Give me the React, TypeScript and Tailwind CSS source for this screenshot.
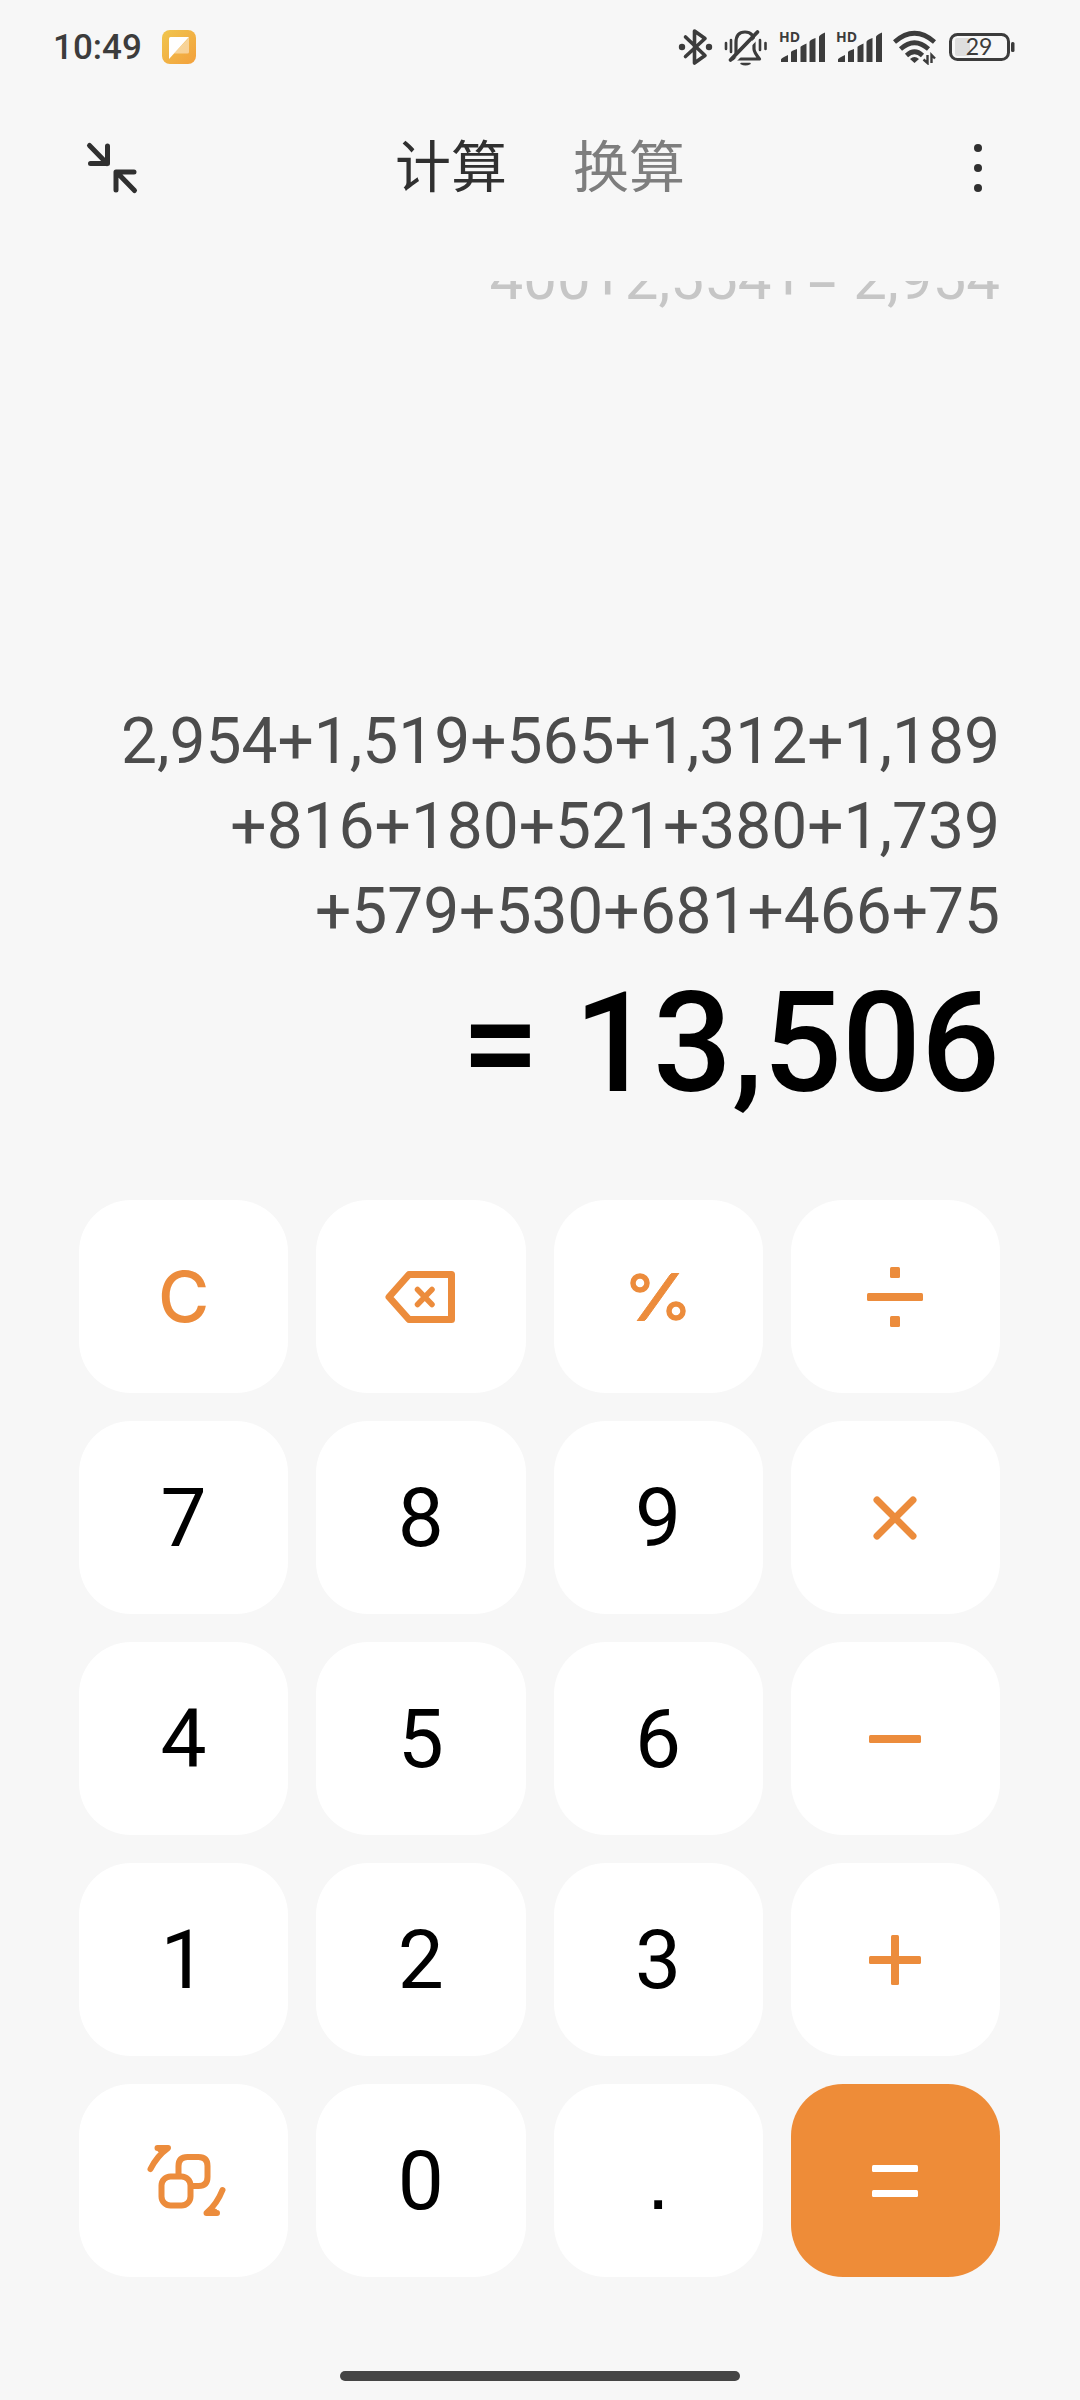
import type { ReactNode } from "react";

const HISTORY = "400+2,554+= 2,954";

const EXPRESSION = [
  "2,954+1,519+565+1,312+1,189",
  "+816+180+521+380+1,739",
  "+579+530+681+466+75",
];

const RESULT = "= 13,506";

type Key = { id: string; label: string; face?: ReactNode };

const KEYS: Key[] = [
  {
    id: "clear",
    label: "清除",
    face: <span className="font-[Inter] text-[70px] font-medium leading-none">C</span>,
  },
  { id: "backspace", label: "退格", face: <BackspaceIcon /> },
  { id: "percent", label: "百分号", face: <PercentIcon /> },
  { id: "divide", label: "除", face: <DivideIcon /> },
  { id: "7", label: "7" },
  { id: "8", label: "8" },
  { id: "9", label: "9" },
  { id: "multiply", label: "乘", face: <MultiplyIcon /> },
  { id: "4", label: "4" },
  { id: "5", label: "5" },
  { id: "6", label: "6" },
  { id: "minus", label: "减", face: <MinusIcon /> },
  { id: "1", label: "1" },
  { id: "2", label: "2" },
  { id: "3", label: "3" },
  { id: "plus", label: "加", face: <PlusIcon /> },
  { id: "switch", label: "切换", face: <SwitchIcon /> },
  { id: "0", label: "0" },
  {
    id: "point",
    label: "小数点",
    face: (
      <span className="font-['Liberation_Sans'] text-[82px] leading-none text-black">.</span>
    ),
  },
  { id: "equals", label: "等于", face: <EqualsIcon /> },
];

export default function App() {
  return (
    <div className="flex min-h-screen flex-col bg-[#f7f7f7] font-[Roboto,'Noto_Sans_CJK_SC',sans-serif]">
      <StatusBar />
      <Header />

      <main className="mt-[39px] flex flex-1 flex-col">
        <section className="flex flex-1 flex-col justify-between px-20 text-right">
          {/* Older entry, scrolled half out of view */}
          <div className="flex h-7 items-end justify-end overflow-hidden">
            <p className="whitespace-nowrap text-[60px] leading-[60px] text-[#c6c6c6]">
              {HISTORY}
            </p>
          </div>
          <div className="pb-[86px]">
            {EXPRESSION.map((line) => (
              <p
                key={line}
                className="whitespace-nowrap text-[64px] leading-[85px] text-[#4c4c4c]"
              >
                {line}
              </p>
            ))}
            <output className="mt-5 block whitespace-nowrap text-[139px] font-medium leading-[140px] text-black">
              {RESULT}
            </output>
          </div>
        </section>

        <section className="grid auto-rows-[193px] grid-cols-4 gap-7 pl-[79px] pr-20">
          {KEYS.map((key) => (
            <KeyButton key={key.id} item={key} />
          ))}
        </section>
      </main>

      <div className="flex justify-center pb-[19px] pt-[94px]">
        <div className="h-2.5 w-[400px] rounded-full bg-[#454545]" />
      </div>
    </div>
  );
}

function KeyButton({ item }: { item: Key }) {
  return (
    <button
      type="button"
      aria-label={item.label}
      className={`flex items-center justify-center rounded-[52px] ${
        item.id === "equals" ? "bg-[#ee8c38] text-white" : "bg-white text-[#ec8c3c]"
      }`}
    >
      {item.face ?? (
        <span className="text-[82px] leading-none text-black">{item.label}</span>
      )}
    </button>
  );
}

function Header() {
  return (
    <header className="grid h-[148px] grid-cols-[1fr_auto_1fr] items-center px-[84px]">
      <button type="button" aria-label="缩小窗口" className="justify-self-start text-[#303030]">
        <svg width="56" height="56" viewBox="0 0 56 56" fill="none" stroke="currentColor" strokeWidth="5" strokeLinecap="round" strokeLinejoin="round">
          <path d="M5.500 5.500 23 23.500M23.500 6V23.500H6.500" />
          <path d="M50.500 50.500 33 32.500M32 50V32H50" />
        </svg>
      </button>
      <nav className="flex gap-[66px] text-[56px] leading-[72px]">
        <button type="button" aria-current="page" className="text-[#303030]">
          计算
        </button>
        <button type="button" className="text-[#7e7e7e]">
          换算
        </button>
      </nav>
      <button type="button" aria-label="更多" className="justify-self-end text-[#303030]">
        <svg width="36" height="56" viewBox="0 0 36 56" fill="currentColor">
          <circle cx="18" cy="8" r="4" />
          <circle cx="18" cy="28" r="4" />
          <circle cx="18" cy="48" r="4" />
        </svg>
      </button>
    </header>
  );
}

/* Status bar */

function StatusBar() {
  return (
    <div className="flex h-[94px] items-center justify-between pl-[53px] pr-[65px] text-[#3c3c3c]">
      <div className="flex items-center gap-5">
        <span className="text-[35px] font-medium leading-none">10:49</span>
        <NotesBadge />
      </div>
      <div className="flex items-center gap-[11px]">
        <BluetoothIcon />
        <MutedBellIcon />
        <SignalIcon />
        <SignalIcon />
        <WifiIcon />
        <Battery level={29} />
      </div>
    </div>
  );
}

function NotesBadge() {
  return (
    <svg width="34" height="34" viewBox="0 0 34 34">
      <defs>
        <linearGradient id="notes" x1="0" y1="0" x2="1" y2="1">
          <stop offset="0" stopColor="#f0c64e" />
          <stop offset="1" stopColor="#f3a03c" />
        </linearGradient>
      </defs>
      <rect width="34" height="34" rx="8" fill="url(#notes)" />
      <path d="M27 7.500V22Q27 23.500 25.500 23.500H12L27 7.500Z" fill="#fff" fillOpacity="0.45" />
      <path d="M8.500 7H27L7 29V8.500Q7 7 8.500 7Z" fill="#fff" />
    </svg>
  );
}

function BluetoothIcon() {
  return (
    <svg width="35" height="38" viewBox="0 0 35 38" fill="none" stroke="currentColor" strokeWidth="3.600" strokeLinejoin="round" strokeLinecap="round">
      <path d="M7.500 9 27 27.500 16.500 35V3L27 10.500 7.500 28.500" />
      <circle cx="4" cy="19" r="3.200" fill="currentColor" stroke="none" />
      <circle cx="31" cy="19" r="3.200" fill="currentColor" stroke="none" />
    </svg>
  );
}

function MutedBellIcon() {
  return (
    <svg width="44" height="38" viewBox="0 0 44 38" fill="none" stroke="currentColor" strokeWidth="3.200" strokeLinecap="round" strokeLinejoin="round">
      <path d="M12 25V14.500Q12 4 21 4T30 14.500V21Q30 24 35.500 31H9" />
      <path d="M17 35.500H26Q21.500 38 17 35.500Z" strokeWidth="1.500" fill="currentColor" />
      <path d="M9.500 34.500 36 7" stroke="#f7f7f7" strokeWidth="3" />
      <path d="M6.500 32 33.500 4" strokeWidth="3.800" />
      <path d="M2 15V21M7 12V24M36 12V22M41.500 15V21" strokeWidth="2.600" />
    </svg>
  );
}

function SignalIcon() {
  return (
    <svg width="46" height="46" viewBox="0 -6 46 46" fill="currentColor">
      <text x="0" y="12" className="font-['Open_Sans'] text-[14px] font-bold">
        HD
      </text>
      <path d="M2 32V29.500Q2 28 9 25V32ZM12 32V22Q12 21 18 19V32ZM21.500 32V17Q21.500 16 27.500 13.500V32ZM30.500 32V12Q30.500 10 36.500 8V32ZM40 32V7Q40 5 46 2.500V32Z" />
    </svg>
  );
}

function WifiIcon() {
  return (
    <svg width="45" height="36" viewBox="0 0 45 36" fill="none" stroke="currentColor" strokeWidth="4.600">
      <path d="M1.500 13Q21.500-4.500 41.500 13" />
      <path d="M7.500 20Q21.500 7.500 35.500 20" />
      <path d="M13.500 26.500Q21.500 19 29.500 26.500" />
      <path d="M17 30Q21.500 26 26 30L21.500 34Z" fill="currentColor" stroke="none" />
      <path d="M34.500 26V34L30.500 30.500M38.500 34V26L42 29.500" strokeWidth="2.400" />
    </svg>
  );
}

function Battery({ level }: { level: number }) {
  return (
    <svg width="66" height="30" viewBox="0 0 66 30" fill="none">
      <rect x="6" y="6" width="15" height="18" rx="2" fill="#dedede" />
      <rect x="1.500" y="2.500" width="58" height="25" rx="7" stroke="currentColor" strokeWidth="3" />
      <rect x="62" y="10" width="3.500" height="10" rx="1.500" fill="currentColor" />
      <text x="30" y="23" textAnchor="middle" fill="currentColor" className="font-[Lato] text-[23px]">
        {level}
      </text>
    </svg>
  );
}

/* Key icons */

function BackspaceIcon() {
  return (
    <svg width="72" height="54" viewBox="0 0 72 54" fill="none" stroke="currentColor" strokeWidth="7" strokeLinejoin="round" strokeLinecap="round">
      <path d="M24 4.500H66.500V49.500H24L4 27Z" />
      <path d="M32.500 19.500 47 34.500M47 19.500 32.500 34.500" strokeWidth="5.500" />
    </svg>
  );
}

function PercentIcon() {
  return (
    <svg width="56" height="48" viewBox="0 0 56 48" fill="none" stroke="currentColor">
      <circle cx="10" cy="10" r="7" strokeWidth="5.500" />
      <circle cx="46" cy="38" r="7" strokeWidth="5.500" />
      <path d="M43 0H49L16 46Q14.500 48 13 48H7L40 2Q41.500 0 43 0Z" fill="currentColor" stroke="currentColor" strokeWidth="1" />
    </svg>
  );
}

function DivideIcon() {
  return (
    <svg width="56" height="60" viewBox="0 0 56 60" fill="currentColor">
      <rect x="23" y="0" width="10" height="11" rx="1.500" />
      <rect x="0" y="26" width="56" height="8" rx="1.500" />
      <rect x="23" y="49" width="10" height="11" rx="1.500" />
    </svg>
  );
}

function MultiplyIcon() {
  return (
    <svg width="44" height="44" viewBox="0 0 44 44" stroke="currentColor" strokeWidth="7" strokeLinecap="round">
      <path d="M4 4 40 40M40 4 4 40" />
    </svg>
  );
}

function MinusIcon() {
  return (
    <svg width="52" height="52" viewBox="0 0 52 52" fill="currentColor">
      <rect x="0" y="22" width="52" height="8" rx="1.500" />
    </svg>
  );
}

function PlusIcon() {
  return (
    <svg width="52" height="52" viewBox="0 0 52 52" fill="currentColor">
      <rect x="0" y="22" width="52" height="8" rx="1.500" />
      <rect x="22" y="1" width="8" height="50" rx="1.500" />
    </svg>
  );
}

function SwitchIcon() {
  return (
    <svg width="84" height="76" viewBox="0 0 84 76" fill="none" stroke="currentColor" strokeWidth="6" strokeLinecap="round" strokeLinejoin="round">
      <path d="M36.500 32V23Q36.500 14 45.500 14H56.500Q65.500 14 65.500 23V34Q65.500 43 56.500 43H51" />
      <rect x="19.500" y="33.500" width="29" height="29" rx="9" />
      <path d="M15.500 5H26Q15 13 8.500 26M18 6.500 26 5 21 9" />
      <path d="M75 70H64.500Q75 61 80.500 47M72.500 68.500 64.500 70 69.500 66" />
    </svg>
  );
}

function EqualsIcon() {
  return (
    <svg width="46" height="32" viewBox="0 0 46 32" fill="currentColor">
      <rect x="0" y="0" width="46" height="7" rx="1.500" />
      <rect x="0" y="25" width="46" height="7" rx="1.500" />
    </svg>
  );
}
